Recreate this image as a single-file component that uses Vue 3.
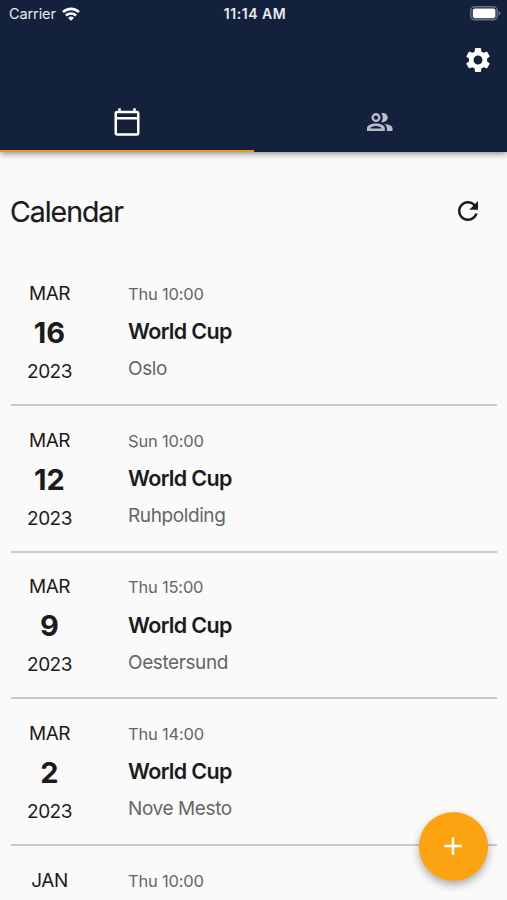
<script setup>
const events = [
  { month: 'MAR', day: 16, year: 2023, time: 'Thu 10:00', title: 'World Cup', place: 'Oslo' },
  { month: 'MAR', day: 12, year: 2023, time: 'Sun 10:00', title: 'World Cup', place: 'Ruhpolding' },
  { month: 'MAR', day: 9, year: 2023, time: 'Thu 15:00', title: 'World Cup', place: 'Oestersund' },
  { month: 'MAR', day: 2, year: 2023, time: 'Thu 14:00', title: 'World Cup', place: 'Nove Mesto' },
  { month: 'JAN', day: '', year: '', time: 'Thu 10:00', title: '', place: '' },
]
</script>

<template>
  <div class="screen">
    <header class="app-bar">
      <div class="status">
        <div class="carrier">
          <span>Carrier</span>
          <svg class="wifi" viewBox="0 0 18 14" fill="none" stroke="#fff" stroke-width="2.6">
            <path d="M1 5.1a11.5 11.5 0 0 1 16 0" />
            <path d="M3.9 8.5a7.4 7.4 0 0 1 10.2 0" />
            <path d="M9 13.8 6.1 10.9a4.1 4.1 0 0 1 5.8 0z" fill="#fff" stroke="none" />
          </svg>
        </div>
        <span class="clock">11:14 AM</span>
        <div class="power">
          <svg class="battery" viewBox="0 0 31 15">
            <rect x=".8" y=".8" width="26.4" height="13" rx="4" fill="none" stroke="#697084" stroke-width="1.5" />
            <rect x="2.8" y="2.4" width="22.6" height="9.8" rx="2" fill="#fff" />
            <path d="M28.6 5c1.4.5 2 1.3 2 2.3s-.6 1.8-2 2.3z" fill="#697084" />
          </svg>
        </div>
      </div>
      <div class="toolbar">
        <svg class="icon" viewBox="0 0 24 24" fill="#fff">
          <path d="M19.14 12.94c.04-.3.06-.61.06-.94 0-.32-.02-.64-.07-.94l2.03-1.58c.18-.14.23-.41.12-.61l-1.92-3.32c-.12-.22-.37-.29-.59-.22l-2.39.96c-.5-.38-1.03-.7-1.62-.94l-.36-2.54c-.04-.24-.24-.41-.48-.41h-3.84c-.24 0-.43.17-.47.41l-.36 2.54c-.59.24-1.13.57-1.62.94l-2.39-.96c-.22-.08-.47 0-.59.22L2.74 8.87c-.12.21-.08.47.12.61l2.03 1.58c-.05.3-.09.63-.09.94s.02.64.07.94l-2.03 1.58c-.18.14-.23.41-.12.61l1.92 3.32c.12.22.37.29.59.22l2.39-.96c.5.38 1.03.7 1.62.94l.36 2.54c.05.24.24.41.48.41h3.84c.24 0 .44-.17.47-.41l.36-2.54c.59-.24 1.13-.56 1.62-.94l2.39.96c.22.08.47 0 .59-.22l1.92-3.32c.12-.22.07-.47-.12-.61l-2.01-1.58zM12 15.6c-1.98 0-3.6-1.62-3.6-3.6s1.62-3.6 3.6-3.6 3.6 1.62 3.6 3.6-1.62 3.6-3.6 3.6z" />
        </svg>
      </div>
      <nav class="tabs">
        <div class="tab active">
          <svg class="icon" viewBox="0 0 24 24" fill="#fff">
            <path d="M20 3h-1V1h-2v2H7V1H5v2H4c-1.1 0-2 .9-2 2v16c0 1.1.9 2 2 2h16c1.1 0 2-.9 2-2V5c0-1.1-.9-2-2-2zm0 18H4V10h16v11zm0-13H4V5h16v3z" />
          </svg>
        </div>
        <div class="tab">
          <svg class="people" viewBox="0 0 26 18" fill="#b9bdc6" fill-rule="evenodd">
            <path d="M9 .1a4.5 4.500 0 1 1 0 9 4.500 4.500 0 0 1 0-9zm0 2.300a2.200 2.200 0 1 0 0 4.400 2.200 2.200 0 0 0 0-4.400z" />
            <path d="M14.200.3c3.400-1 6.500 1.100 6.500 4.300s-3.100 5.300-6.500 4.300c2-2.600 2-6 0-8.600z" />
            <path d="M0 17.900v-2.700c0-3 4.300-4.700 8.900-4.700s8.900 1.700 8.900 4.700v2.700zM3 15.600h11.800c-.7-1.600-3-2.600-5.900-2.600s-5.200 1-5.900 2.600z" />
            <path d="M17.200 10.900c4.400.2 8.300 1.700 8.300 4.300v2.700h-5.600v-2.700c0-1.800-.9-3.200-2.700-4.300z" />
          </svg>
        </div>
      </nav>
    </header>

    <main class="content">
      <div class="heading">
        <h1>Calendar</h1>
        <svg class="icon" viewBox="0 0 24 24" fill="#1b1b1b">
          <path d="M17.65 6.35C16.2 4.9 14.21 4 12 4c-4.42 0-7.99 3.58-7.99 8s3.57 8 7.99 8c3.73 0 6.84-2.55 7.73-6h-2.08c-.82 2.33-3.04 4-5.65 4-3.31 0-6-2.69-6-6s2.69-6 6-6c1.66 0 3.14.69 4.22 1.78L13 11h7V4l-2.35 2.35z" />
        </svg>
      </div>
      <section class="list">
        <article v-for="(event, i) in events" :key="i" class="event">
          <div class="date">
            <span class="month">{{ event.month }}</span>
            <span class="day">{{ event.day }}</span>
            <span class="year">{{ event.year }}</span>
          </div>
          <div class="info">
            <span class="time">{{ event.time }}</span>
            <span class="title">{{ event.title }}</span>
            <span class="place">{{ event.place }}</span>
          </div>
        </article>
      </section>
    </main>

    <button class="fab" aria-label="Add">
      <svg class="icon" viewBox="0 0 24 24" fill="#fff">
        <path d="M19 13h-6v6h-2v-6H5v-2h6V5h2v6h6v2z" />
      </svg>
    </button>
  </div>
</template>

<style>
body {
  margin: 0;
  background: #fafafa;
  overflow: hidden;
}
</style>

<style scoped>
.screen {
  position: relative;
  display: flex;
  flex-direction: column;
  width: 100%;
  height: 900px;
  overflow: hidden;
  background: #fafafa;
  color: #1b1b1b;
  font-family: Inter, "Liberation Sans", sans-serif;
}
.icon {
  display: block;
  flex: none;
  width: 30px;
  height: 30px;
}
.app-bar {
  flex: none;
  height: 152px;
  background: #14213d;
  box-shadow: 0 2px 6px rgba(0, 0, 0, 0.42);
}
.status {
  display: grid;
  grid-template-columns: 1fr auto 1fr;
  align-items: center;
  box-sizing: border-box;
  height: 27px;
  padding: 0 6px 0 9px;
  color: #e9ebf0;
  font-size: 14.5px;
}
.carrier {
  display: flex;
  align-items: center;
  gap: 6px;
  letter-spacing: -0.1px;
}
.wifi {
  width: 18px;
  height: 14px;
}
.clock {
  font-size: 14px;
  font-weight: 600;
  letter-spacing: 0.55px;
}
.power {
  display: flex;
  justify-content: flex-end;
}
.battery {
  width: 31px;
  height: 15px;
}
.toolbar {
  display: flex;
  align-items: center;
  justify-content: flex-end;
  height: 65px;
  padding-right: 14.5px;
}
.tabs {
  display: flex;
  height: 60px;
}
.tab {
  display: flex;
  flex: 1;
  align-items: center;
  justify-content: center;
  padding-top: 2px;
  border-bottom: 2px solid transparent;
}
.tab.active {
  border-bottom-color: #e59a1b;
}
.people {
  width: 26px;
  height: 18px;
}
.content {
  padding: 0 10px 0 11px;
}
.heading {
  display: flex;
  align-items: center;
  justify-content: space-between;
  height: 107px;
  padding-right: 14px;
  margin-top: 5px;
}
h1 {
  margin: 0 0 0 -1px;
  padding-top: 1px;
  font-size: 28.5px;
  font-weight: 400;
  letter-spacing: -1.05px;
  -webkit-text-stroke: 0.2px currentColor;
}
.list {
  margin-top: -4.5px;
}
.event {
  display: flex;
  box-sizing: border-box;
  height: 146.67px;
  border-bottom: 2px solid #c8c8c8;
}
.date {
  display: flex;
  flex-direction: column;
  align-items: center;
  width: 77px;
  padding-top: 14.4px;
  margin-right: 40px;
  line-height: 39px;
}
.date span {
  height: 39px;
}
.month,
.year {
  font-size: 19px;
  letter-spacing: -0.5px;
}
.day {
  font-size: 29px;
  font-weight: 700;
}
.info {
  display: flex;
  flex-direction: column;
  padding-top: 16.4px;
  line-height: 37.3px;
}
.time {
  color: #666;
  font-size: 16.5px;
  letter-spacing: -0.2px;
}
.title {
  font-size: 21.5px;
  font-weight: 600;
  letter-spacing: -0.65px;
}
.place {
  color: #666;
  font-size: 19px;
  letter-spacing: -0.4px;
}
.fab {
  position: absolute;
  right: 19.5px;
  bottom: 19.5px;
  display: flex;
  align-items: center;
  justify-content: center;
  width: 69px;
  height: 69px;
  padding: 0;
  border: 0;
  border-radius: 50%;
  background: #fca311;
  box-shadow: 0 4px 8px rgba(0, 0, 0, 0.32);
}
</style>
